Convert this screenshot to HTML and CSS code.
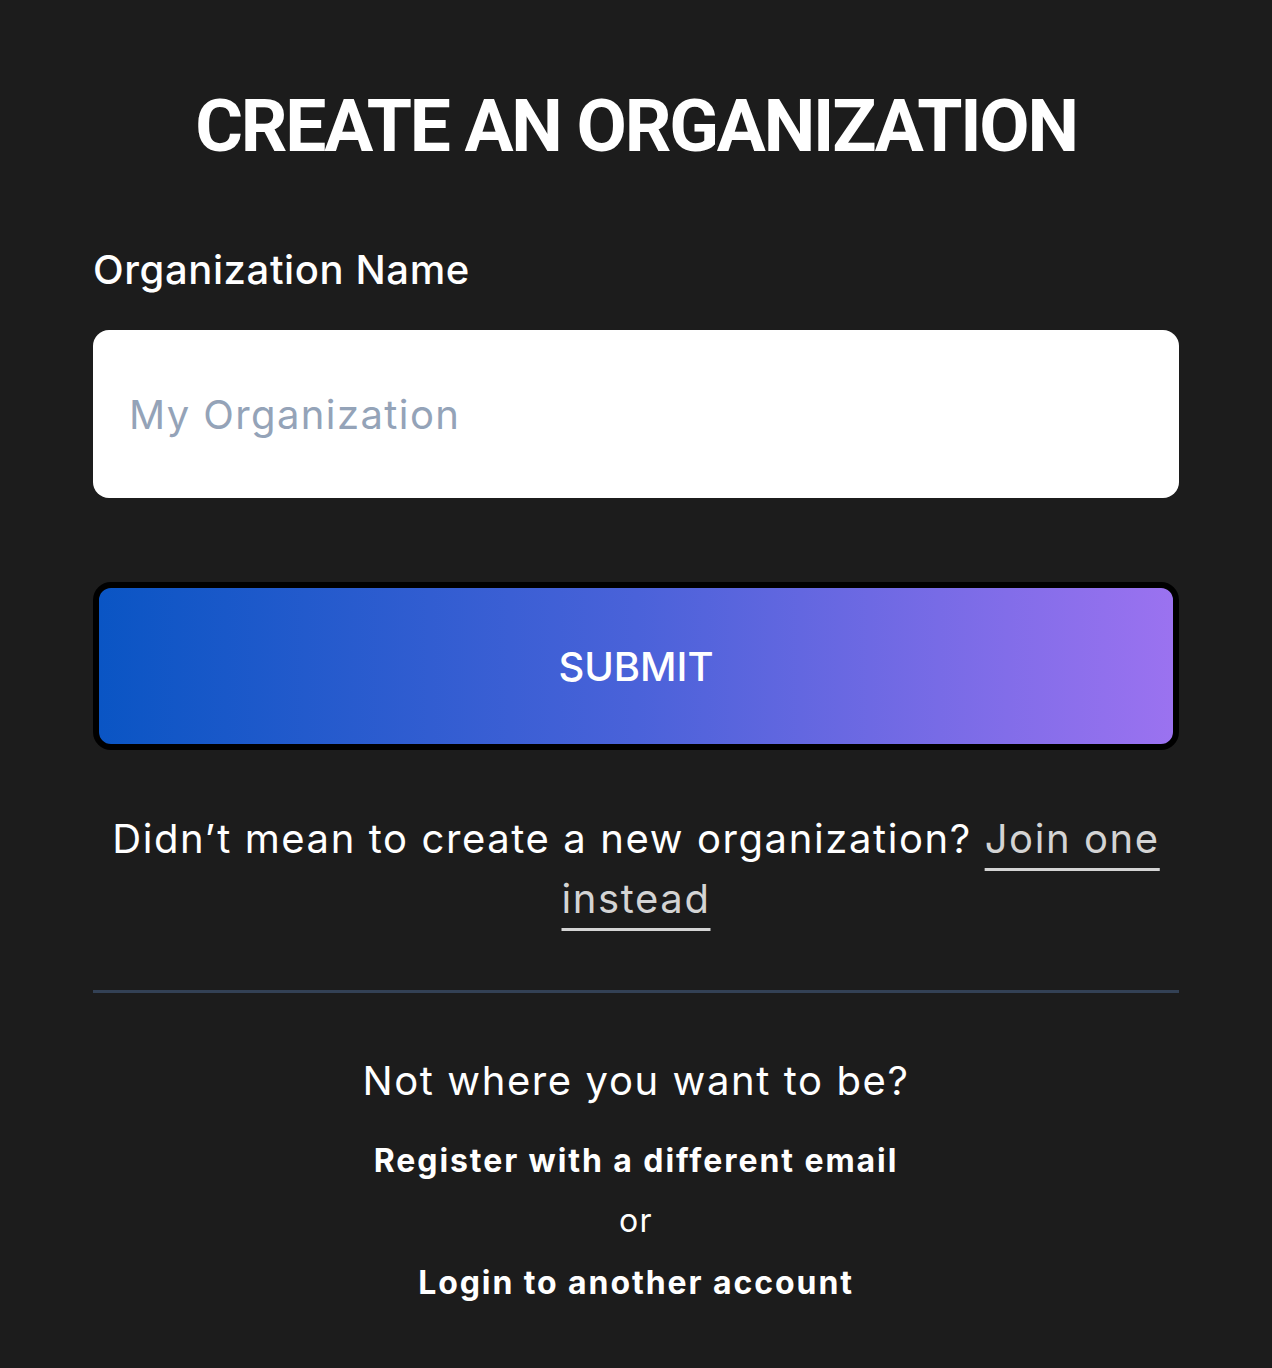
FILE: index.html
```html
<!DOCTYPE html>
<html lang="en">
<head>
    <meta charset="UTF-8">
    <meta name="viewport" content="width=device-width, initial-scale=1.0">
    <title>Create an Organization</title>
    <link rel="stylesheet" href="styles.css">
</head>
<body>

    <main class="org-form">
        <h1 class="org-title">CREATE AN ORGANIZATION</h1>

        <form class="form-body" onsubmit="return false">
            <label class="field-label" for="orgName">Organization Name</label>
            <input class="field-input" id="orgName" type="text" placeholder="My Organization">

            <button class="submit-btn" type="submit">SUBMIT</button>
        </form>

        <p class="join-hint">Didn’t mean to create a new organization? <a href="#" class="join-link">Join one instead</a></p>

        <hr class="divider">

        <div class="switch-account">
            <p class="switch-question">Not where you want to be?</p>
            <a href="#" class="switch-link register-link">Register with a different email</a>
            <span class="switch-or">or</span>
            <a href="#" class="switch-link">Login to another account</a>
        </div>
    </main>

</body>
</html>
```

FILE: styles.css
```css
body {
    margin: 0;
    padding: 0;
    background-color: #1c1c1c;
    color: white;
    font-family: Inter, "Noto Sans", sans-serif;
}

.org-form {
    max-width: 1086px;
    margin: 0 auto;
    padding-top: 82px;
    display: flex;
    flex-direction: column;
}

.org-title {
    margin: 0;
    font-family: Roboto, sans-serif;
    font-size: 73px;
    font-weight: 700;
    letter-spacing: -2.2px;
    line-height: 88px;
    text-align: center;
}

.form-body {
    display: flex;
    flex-direction: column;
    margin-top: 76px;
}

.field-label {
    font-size: 40px;
    font-weight: 500;
    letter-spacing: 0.6px;
    line-height: 48px;
}

.field-input {
    margin-top: 36px;
    height: 168px;
    box-sizing: border-box;
    border: none;
    border-radius: 16px;
    padding: 0 36px;
    background: white;
    font-family: inherit;
    font-size: 40px;
    letter-spacing: 0.035em;
    color: #1c1c1c;
    outline: none;
}

.field-input::placeholder {
    color: #94a3b8;
}

.submit-btn {
    margin-top: 84px;
    height: 168px;
    border: 6px solid black;
    border-radius: 18px;
    background: linear-gradient(to right, #0a55c4, #4a62d9 50%, #9b72f0);
    color: white;
    font-family: inherit;
    font-size: 40px;
    font-weight: 500;
    cursor: pointer;
}

.join-hint {
    margin: 59px 0 0;
    font-size: 40px;
    letter-spacing: 0.04em;
    line-height: 60px;
    text-align: center;
}

.join-link {
    color: #d4d4d4;
    text-decoration: underline;
    text-decoration-thickness: 3px;
    text-underline-offset: 15px;
}

.divider {
    margin: 61px 0 0;
    border: none;
    border-top: 3px solid #334155;
}

.switch-account {
    display: flex;
    flex-direction: column;
    align-items: center;
    margin-top: 60px;
}

.switch-question {
    margin: 0;
    font-size: 40px;
    letter-spacing: 0.04em;
    line-height: 56px;
}

.switch-link {
    margin-top: 22px;
    color: white;
    text-decoration: none;
    font-size: 32px;
    font-weight: 700;
    letter-spacing: 0.06em;
    line-height: 40px;
}

.register-link {
    margin-top: 32px;
}

.switch-or {
    margin-top: 20px;
    font-size: 32px;
    letter-spacing: 0.04em;
    line-height: 40px;
}
```
